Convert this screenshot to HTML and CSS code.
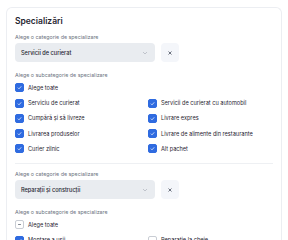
FILE: index.html
```html
<!DOCTYPE html>
<html><head>
<title>Specializări</title>
<link rel="stylesheet" href="styles.css">
</head><body>

<div class="card">
  <h2 class="title">Specializări</h2>

  <div class="group">
    <div class="label">Alege o categorie de specializare</div>
    <div class="pick-row">
      <div class="select">
        <span>Servicii de curierat</span>
        <svg class="chev" viewBox="0 0 8 8"><path d="M2 3l2 2 2-2"/></svg>
      </div>
      <div class="clear"><svg viewBox="0 0 8 8"><path d="M2.5 2.5l3 3M5.5 2.5l-3 3"/></svg></div>
    </div>
    <div class="label sub">Alege o subcategorie de specializare</div>
    <div class="check all"><span class="box on"><svg viewBox="0 0 10 10"><path d="M2.6 5.2l1.7 1.7 3.2-3.6"/></svg></span>Alege toate</div>
    <div class="checks">
      <div class="check"><span class="box on"><svg viewBox="0 0 10 10"><path d="M2.6 5.2l1.7 1.7 3.2-3.6"/></svg></span>Serviciu de curierat</div>
      <div class="check"><span class="box on"><svg viewBox="0 0 10 10"><path d="M2.6 5.2l1.7 1.7 3.2-3.6"/></svg></span>Servicii de curierat cu automobil</div>
      <div class="check"><span class="box on"><svg viewBox="0 0 10 10"><path d="M2.6 5.2l1.7 1.7 3.2-3.6"/></svg></span>Cumpără și să livreze</div>
      <div class="check"><span class="box on"><svg viewBox="0 0 10 10"><path d="M2.6 5.2l1.7 1.7 3.2-3.6"/></svg></span>Livrare expres</div>
      <div class="check"><span class="box on"><svg viewBox="0 0 10 10"><path d="M2.6 5.2l1.7 1.7 3.2-3.6"/></svg></span>Livrarea produselor</div>
      <div class="check"><span class="box on"><svg viewBox="0 0 10 10"><path d="M2.6 5.2l1.7 1.7 3.2-3.6"/></svg></span>Livrare de alimente din restaurante</div>
      <div class="check"><span class="box on"><svg viewBox="0 0 10 10"><path d="M2.6 5.2l1.7 1.7 3.2-3.6"/></svg></span>Curier zilnic</div>
      <div class="check"><span class="box on"><svg viewBox="0 0 10 10"><path d="M2.6 5.2l1.7 1.7 3.2-3.6"/></svg></span>Alt pachet</div>
    </div>
  </div>

  <div class="group second">
    <div class="label">Alege o categorie de specializare</div>
    <div class="pick-row">
      <div class="select">
        <span>Reparații și construcții</span>
        <svg class="chev" viewBox="0 0 8 8"><path d="M2 3l2 2 2-2"/></svg>
      </div>
      <div class="clear"><svg viewBox="0 0 8 8"><path d="M2.5 2.5l3 3M5.5 2.5l-3 3"/></svg></div>
    </div>
    <div class="label sub">Alege o subcategorie de specializare</div>
    <div class="check all"><span class="box part"><svg viewBox="0 0 10 10"><path d="M3 5h4"/></svg></span>Alege toate</div>
    <div class="checks">
      <div class="check"><span class="box on"><svg viewBox="0 0 10 10"><path d="M2.6 5.2l1.7 1.7 3.2-3.6"/></svg></span>Montare a ușii</div>
      <div class="check"><span class="box"></span>Reparație la cheie</div>
    </div>
  </div>
</div>

</body></html>
```

FILE: styles.css
```css
html, body {
  margin: 0;
  padding: 0;
  background: #fff;
  }
body {
  font-family: Inter, "Noto Sans", sans-serif;
  color: #1f2430;
  }
.card {
  margin: 7px 6px 0;
  border: 1px solid #eceef2;
  border-bottom: 0;
  border-radius: 6px 6px 0 0;
  padding: 8px 8px 0;
  height: 240px;
  }
.title {
  margin: 0;
  font-size: 8.5px;
  font-weight: 600;
  line-height: 11px;
  }
.label {
  font-size: 5.3px;
  color: #6b7280;
  line-height: 7px;
  margin-top: 7px;
  }
.label.sub {
  margin-top: 9.5px;
  }
.pick-row {
  display: flex;
  gap: 6px;
  margin-top: 2px;
  }
.select {
  width: 140px;
  height: 19px;
  box-sizing: border-box;
  background: #e9ecf0;
  border-radius: 4px;
  display: flex;
  align-items: center;
  justify-content: space-between;
  padding: 0 6px;
  font-size: 5.6px;
  font-weight: 500;
  }
.chev {
  width: 8px;
  height: 8px;
  }
.chev path {
  fill: none;
  stroke: #b4b9c1;
  stroke-width: 0.8;
  }
.clear {
  width: 18px;
  height: 19px;
  border-radius: 4px;
  background: #f4f6fa;
  display: flex;
  align-items: center;
  justify-content: center;
  }
.clear svg {
  width: 8px;
  height: 8px;
  }
.clear path {
  fill: none;
  stroke: #5c6370;
  stroke-width: 0.9;
  }
.check {
  display: flex;
  align-items: center;
  gap: 4px;
  font-size: 5.6px;
  height: 9px;
  white-space: nowrap;
  }
.check.all {
  margin-top: 4.5px;
  }
.checks {
  display: grid;
  grid-template-columns: 133px 1fr;
  row-gap: 6.33px;
  margin-top: 6.5px;
  }
.box {
  width: 9px;
  height: 9px;
  box-sizing: border-box;
  border-radius: 2px;
  border: 1px solid #c9cdd4;
  background: #fff;
  flex: none;
  }
.box svg {
  display: block;
  width: 100%;
  height: 100%;
  }
.box.on {
  background: #2f6be0;
  border-color: #2f6be0;
  }
.box.on path {
  fill: none;
  stroke: #fff;
  stroke-width: 1;
  }
.box.part path {
  fill: none;
  stroke: #4b5563;
  stroke-width: 1;
  }
.second {
  border-top: 1px solid #eef0f3;
  margin-top: 9.5px;
  padding-top: 0.5px;
  }
```
